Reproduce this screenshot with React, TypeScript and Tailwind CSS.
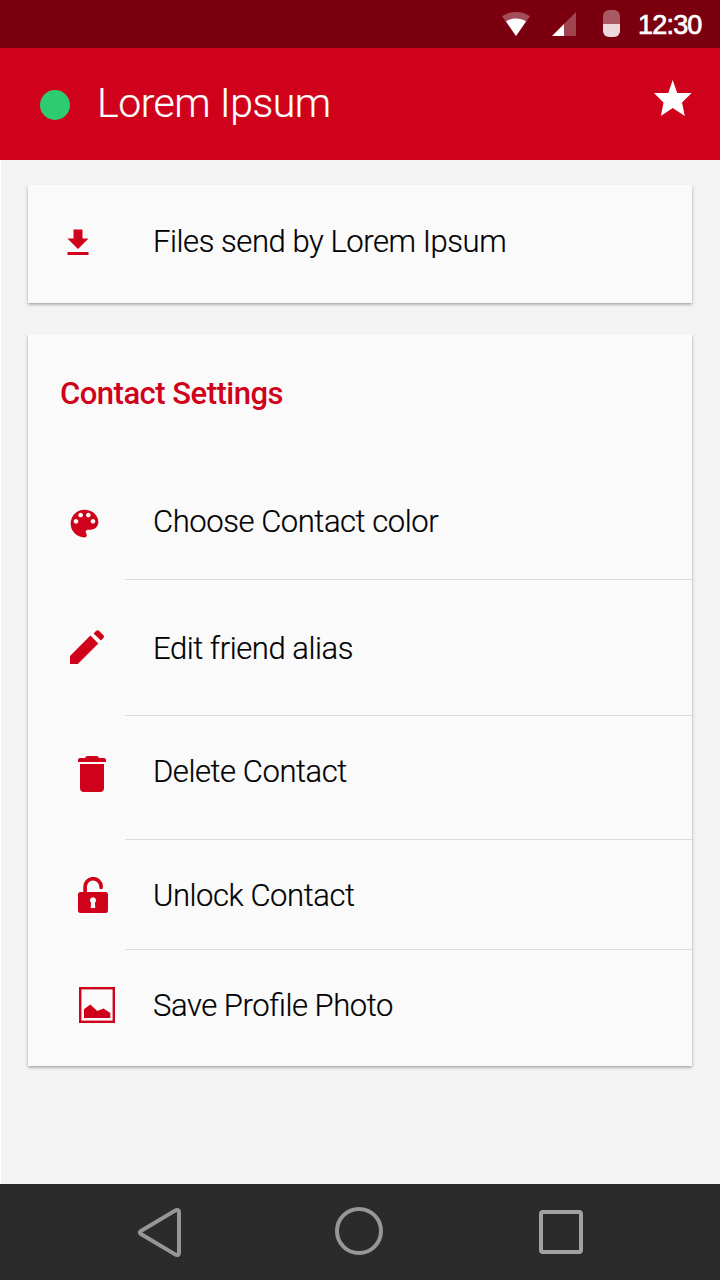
import type { ReactNode } from "react";

const RED = "#d0021b";

function StatusBar() {
  return (
    <div className="flex h-12 bg-[#7a0010]">
      <svg className="ml-[502px] mt-3 shrink-0" width="28" height="24" viewBox="0 0 28 24">
        <path d="M0 4.3C8-1.4 20-1.4 28 4.3L14 24z" fill="#fff" fillOpacity=".3" />
        <path d="M4 9.4C10 5.6 18 5.6 24 9.4L14 24z" fill="#fff" />
      </svg>
      <svg className="ml-[22px] mt-3 shrink-0" width="24" height="24" viewBox="0 0 24 24">
        <path d="M24 0v24H12V12z" fill="#fff" fillOpacity=".27" />
        <path d="M12 12v12H0z" fill="#fff" />
      </svg>
      <div className="ml-[27px] mt-[10px] flex h-[27px] w-[17px] shrink-0 flex-col overflow-hidden rounded-[6px]">
        <div className="h-[14px] bg-white/35" />
        <div className="flex-1 bg-white/85" />
      </div>
      <span className="ml-[18px] mt-[10px] font-['Liberation_Sans',sans-serif] text-[27px] leading-[30px] tracking-[-0.8px] text-white [-webkit-text-stroke:0.7px_white]">
        12:30
      </span>
    </div>
  );
}

function Header() {
  return (
    <header className="flex h-28 bg-[#d0021b]">
      <div className="ml-10 mt-[42px] size-[30px] rounded-full bg-[#2ecc71]" />
      <h1 className="ml-[27px] mt-[30px] flex-1 text-[41px] font-light leading-[50px] tracking-[-0.48px] text-white [-webkit-text-stroke:0.2px_white]">
        Lorem Ipsum
      </h1>
      <svg className="mr-7 mt-8" width="38" height="37" viewBox="0 0 38 37">
        <path d="M18.700 0l4.500 13h14.500l-9.700 9.500L30.800 36l-12.100-8L6.900 36l2.600-13.500L0 13h14.300z" fill="#fff" />
      </svg>
    </header>
  );
}

function DownloadIcon() {
  return (
    <svg className="ml-8 mt-10" width="36" height="36" viewBox="0 0 24 24">
      <path d="M19 9h-4V3H9v6H5l7 7 7-7zM5 18v2h14v-2H5z" fill={RED} />
    </svg>
  );
}

function PaletteIcon() {
  return (
    <svg className="ml-[38px] mt-[55px]" width="37" height="37" viewBox="0 0 24 24">
      <path
        d="M12 3c-4.97 0-9 4.03-9 9s4.03 9 9 9c.83 0 1.5-.67 1.5-1.5 0-.39-.15-.74-.39-1.01-.23-.26-.38-.61-.38-.99 0-.83.67-1.5 1.5-1.5H16c2.76 0 5-2.24 5-5 0-4.42-4.03-8-9-8zm-5.5 9c-.83 0-1.5-.67-1.5-1.5S5.67 9 6.5 9 8 9.67 8 10.5 7.33 12 6.5 12zm3-4C8.67 8 8 7.33 8 6.5S8.67 5 9.5 5s1.5.67 1.5 1.5S10.33 8 9.5 8zm5 0c-.83 0-1.5-.67-1.5-1.5S13.67 5 14.5 5s1.5.67 1.5 1.5S15.33 8 14.5 8zm3 4c-.83 0-1.5-.67-1.5-1.5S16.67 9 17.5 9s1.5.67 1.5 1.5-.67 1.5-1.5 1.5z"
        fill={RED}
      />
    </svg>
  );
}

function PencilIcon() {
  return (
    <svg className="ml-[42px] mt-[50px]" width="34" height="34" viewBox="0 0 34 34">
      <path d="M0 34v-8L20.4 5.6l7.900 7.800L7.800 34z" fill={RED} />
      <path d="M23.600 3.500L26 1.100q1.600-1.600 3.200 0l4 4q1.600 1.600 0 3.200l-2.300 2.300z" fill={RED} />
    </svg>
  );
}

function TrashIcon() {
  return (
    <svg className="ml-[50px] mt-10" width="28" height="36" viewBox="0 0 28 36">
      <path
        d="M0 6V4q0-2 2-2h5q.5-2 2.500-2h9q2 0 2.500 2h5q2 0 2 2v2zM2 8h24v24q0 4-4 4H6q-4 0-4-4z"
        fill={RED}
      />
    </svg>
  );
}

function UnlockIcon() {
  return (
    <svg className="ml-[50px] mt-[37px]" width="30" height="36" viewBox="0 0 30 36">
      <path
        d="M7.100 17V10a8 8 0 0 1 16-.5v.8"
        fill="none"
        stroke={RED}
        strokeWidth="3.700"
        strokeLinecap="round"
      />
      <path
        fillRule="evenodd"
        d="M2.500 15h25q2.500 0 2.500 2.500v16q0 2.500-2.500 2.500h-25Q0 36 0 33.500v-16Q0 15 2.500 15zM15 20.200a3.100 3.100 0 0 0-1.900 5.500L12.700 31h4.600l-.4-5.300a3.100 3.100 0 0 0-1.900-5.500z"
        fill={RED}
      />
    </svg>
  );
}

function PhotoIcon() {
  return (
    <svg className="ml-[51px] mt-[37px]" width="36" height="36" viewBox="0 0 36 36">
      <rect x="1.200" y="1.200" width="33.600" height="33.600" fill="none" stroke={RED} strokeWidth="2.400" />
      <path d="M5 22.300l6.300-4.800 7 6.400 6.300-2.300 6.700 4.300v5H5z" fill={RED} />
    </svg>
  );
}

interface RowProps {
  icon: ReactNode;
  label: string;
  height: string;
  labelTop: string;
  divider?: boolean;
}

function Row({ icon, label, height, labelTop, divider = true }: RowProps) {
  return (
    <div className={`flex ${height}`}>
      <div className="w-[97px] shrink-0">{icon}</div>
      <div className={`flex-1 pl-7 ${labelTop} ${divider ? "border-b border-[#dcdcdc]" : ""}`}>
        <span className="block whitespace-nowrap text-[31px] font-light leading-9 tracking-[-0.44px] text-black [-webkit-text-stroke:0.2px_black] [font-feature-settings:'liga'_1]">
          {label}
        </span>
      </div>
    </div>
  );
}

export default function App() {
  return (
    <div className="flex h-[1280px] w-[720px] flex-col overflow-hidden bg-[#f3f3f3] font-['Roboto',sans-serif]">
      <StatusBar />
      <Header />
      <main className="flex-1 border-l border-white pl-[27px] pr-7 pt-[25px]">
        <section className="bg-[#fafafa] shadow-[0_1.5px_3px_rgba(0,0,0,0.35)]">
          <Row icon={<DownloadIcon />} label="Files send by Lorem Ipsum" height="h-[118px]" labelTop="pt-[39px]" divider={false} />
        </section>
        <section className="mt-[31px] bg-[#fafafa] shadow-[0_1.5px_3px_rgba(0,0,0,0.35)]">
          <h2 className="h-[116px] pl-8 pt-[42px] text-[31px] font-medium leading-9 tracking-[-0.5px] text-[#d0021b]">Contact Settings</h2>
          <Row icon={<PaletteIcon />} label="Choose Contact color" height="h-[130px]" labelTop="pt-[54px]" />
          <Row icon={<PencilIcon />} label="Edit friend alias" height="h-[136px]" labelTop="pt-[51px]" />
          <Row icon={<TrashIcon />} label="Delete Contact" height="h-[124px]" labelTop="pt-[38px]" />
          <Row icon={<UnlockIcon />} label="Unlock Contact" height="h-[110px]" labelTop="pt-[38px]" />
          <Row icon={<PhotoIcon />} label="Save Profile Photo" height="h-[116px]" labelTop="pt-[38px]" divider={false} />
        </section>
      </main>
      <nav className="flex h-24 bg-[#2b2b2b]">
        <svg className="ml-[138px] mt-6" width="43" height="49" viewBox="0 0 43 49">
          <path d="M2.500 23.200L37.500 2.400Q41 1 41 4v41q0 3-3.500 1.600L2.500 25.800q-1-1.300 0-2.600z" fill="none" stroke="#979797" strokeWidth="4" strokeLinejoin="round" />
        </svg>
        <div className="ml-[154px] mt-[23px] size-12 rounded-full border-4 border-[#979797]" />
        <div className="ml-[156px] mt-[26px] size-11 rounded-[4px] border-4 border-[#a1a1a1]" />
      </nav>
    </div>
  );
}
